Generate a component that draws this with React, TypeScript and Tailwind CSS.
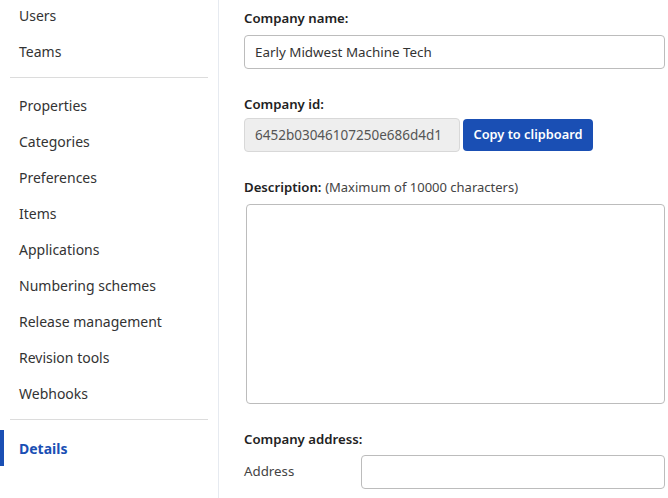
import React from 'react';

const navGroups = [
  ['Users', 'Teams'],
  ['Properties', 'Categories', 'Preferences', 'Items', 'Applications', 'Numbering schemes', 'Release management', 'Revision tools', 'Webhooks'],
];

export default function App() {
  return (
    <div className="flex h-[498px] w-[668px] overflow-hidden bg-white text-[14px] text-[#333]" style={{ fontFamily: '"Noto Sans", "Open Sans", sans-serif' }}>
      {/* Sidebar */}
      <div className="w-[219px] shrink-0 border-r border-[#e6eaf0]">
        <div className="-mt-[3px]">
          {navGroups.map((group, gi) => (
            <div key={gi} className={`border-b border-[#dcdcdc] mx-[10px] pb-[8px] ${gi === 0 ? 'mb-[9px]' : 'mb-[10px]'}`}>
              {group.map(item => (
                <div key={item} className="h-[36px] flex items-center px-[9px] text-[#333]">{item}</div>
              ))}
            </div>
          ))}
          <div className="relative h-[36px] flex items-center pl-[19px] font-bold text-[#1a4fb4]">
            <span className="absolute left-0 top-0 h-full w-[4px] bg-[#1a4fb4]" />
            Details
          </div>
        </div>
      </div>

      {/* Content */}
      <div className="flex-1 pl-[25px] pr-[3px] pt-[8px]">
        <div className="font-semibold text-[13.2px] text-[#222] h-[20px] leading-[20px]">Company name:</div>
        <div className="mt-[7px] h-[34px] border border-[#bcbcbc] rounded-[4px] flex items-center px-[10px] text-[13.4px] text-[#333]">Early Midwest Machine Tech</div>

        <div className="mt-[25px] font-semibold text-[13.2px] text-[#222] h-[20px] leading-[20px]">Company id:</div>
        <div className="mt-[4px] flex items-center gap-[3px]">
          <div className="w-[216px] h-[34px] bg-[#eeeeee] border border-[#d8d8d8] rounded-[4px] flex items-center px-[10px] text-[13.5px] text-[#555]">6452b03046107250e686d4d1</div>
          <button className="h-[32px] w-[130px] bg-[#1a4fb4] text-white rounded-[4px] font-semibold text-[12.8px]">Copy to clipboard</button>
        </div>

        <div className="mt-[25px] h-[20px] leading-[20px] text-[#222]">
          <span className="font-semibold text-[13.2px]">Description:</span>{' '}
          <span className="text-[13px] text-[#444]">(Maximum of 10000 characters)</span>
        </div>
        <div className="mt-[7px] ml-[2px] h-[200px] border border-[#bcbcbc] rounded-[4px]" />

        <div className="mt-[25px] font-semibold text-[13.2px] text-[#222] h-[20px] leading-[20px]">Company address:</div>
        <div className="mt-[6px] flex items-center">
          <div className="w-[117px] text-[13.3px] text-[#444]">Address</div>
          <div className="flex-1 h-[34px] border border-[#bcbcbc] rounded-[4px]" />
        </div>
      </div>
    </div>
  );
}
